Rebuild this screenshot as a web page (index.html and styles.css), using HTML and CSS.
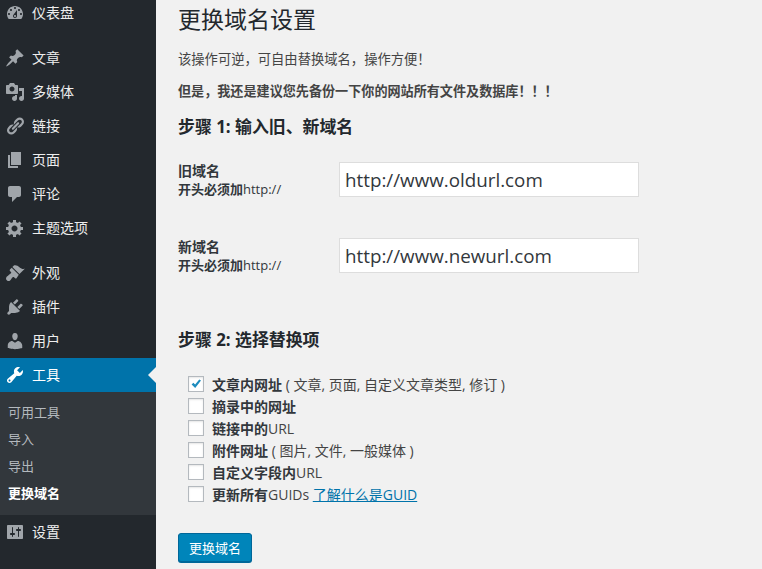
FILE: index.html
```html
<!DOCTYPE html>
<html>

<head>
  <title>更换域名</title>
  <link rel="stylesheet" href="styles.css">
</head>

<body>
  <div class="admin">
    <div class="sidebar">
      <ul class="menu">
        <li class="menu-item">
          <svg class="menu-icon" viewBox="0 0 20 20"><path d="M3.76 16h12.48c1.1-1.37 1.76-3.11 1.76-5 0-4.42-3.58-8-8-8s-8 3.58-8 8c0 1.89.66 3.63 1.76 5zM10 4c.55 0 1 .45 1 1s-.45 1-1 1-1-.45-1-1 .45-1 1-1zM6 6c.55 0 1 .45 1 1s-.45 1-1 1-1-.45-1-1 .45-1 1-1zm8 0c.55 0 1 .45 1 1s-.45 1-1 1-1-.45-1-1 .45-1 1-1zm-5.37 5.55L12 7v6c0 1.1-.9 2-2 2s-2-.9-2-2c0-.57.24-1.08.63-1.45zM4 10c.55 0 1 .45 1 1s-.45 1-1 1-1-.45-1-1 .45-1 1-1zm12 0c.55 0 1 .45 1 1s-.45 1-1 1-1-.45-1-1 .45-1 1-1zm-5 3c0-.55-.45-1-1-1s-1 .45-1 1 .45 1 1 1 1-.45 1-1z"/></svg>
          <span class="menu-label">仪表盘</span>
        </li>
        <li class="menu-sep"></li>
        <li class="menu-item">
          <svg class="menu-icon" viewBox="0 0 20 20"><path d="M10.44 3.02l1.82-1.82 6.36 6.35-1.83 1.82c-1.05-.68-2.48-.57-3.41.36l-.75.75c-.92.93-1.04 2.35-.35 3.41l-1.83 1.82-2.41-2.41-2.8 2.79c-.42.42-3.38 2.71-3.8 2.29s1.86-3.39 2.28-3.81l2.79-2.79L4.1 9.36l1.83-1.82c1.05.69 2.48.57 3.41-.36l.75-.75c.93-.92 1.04-2.35.35-3.41z"/></svg>
          <span class="menu-label">文章</span>
        </li>
        <li class="menu-item">
          <svg class="menu-icon" viewBox="0 0 20 20"><path d="M13 11V4c0-.55-.45-1-1-1h-1.67L9 1H5L3.67 3H2c-.55 0-1 .45-1 1v7c0 .55.45 1 1 1h10c.55 0 1-.45 1-1zM7 4.5c1.38 0 2.5 1.12 2.5 2.5S8.38 9.5 7 9.5 4.5 8.38 4.5 7 5.62 4.5 7 4.5zM14 6h5v10.5c0 1.38-1.12 2.5-2.5 2.5S14 17.88 14 16.5s1.12-2.5 2.5-2.5c.17 0 .34.02.5.05V9h-3V6zm-4 8.05V13h2v3.5c0 1.38-1.12 2.5-2.5 2.5S7 17.88 7 16.5 8.12 14 9.5 14c.17 0 .34.02.5.05z"/></svg>
          <span class="menu-label">多媒体</span>
        </li>
        <li class="menu-item">
          <svg class="menu-icon" viewBox="0 0 20 20"><path d="M17.74 2.76c1.68 1.69 1.68 4.41 0 6.1l-1.53 1.52c-1.12 1.12-2.7 1.47-4.14 1.09l2.62-2.61.76-.77.76-.76c.84-.84.84-2.2 0-3.04-.84-.85-2.2-.85-3.04 0l-.77.76-3.38 3.38c-.37-1.44-.02-3.02 1.1-4.14l1.52-1.53c1.69-1.68 4.42-1.68 6.1 0zM8.59 13.43l5.34-5.34c.42-.42.42-1.1 0-1.52-.44-.43-1.13-.39-1.53 0l-5.33 5.34c-.42.42-.42 1.1 0 1.52.44.43 1.13.39 1.52 0zm-.76 2.29l4.14-4.15c.38 1.44.03 3.02-1.09 4.14l-1.52 1.53c-1.69 1.68-4.41 1.68-6.1 0-1.68-1.68-1.68-4.42 0-6.1l1.53-1.52c1.12-1.12 2.7-1.47 4.14-1.1l-4.14 4.15c-.85.84-.85 2.2 0 3.05.84.84 2.2.84 3.04 0z"/></svg>
          <span class="menu-label">链接</span>
        </li>
        <li class="menu-item">
          <svg class="menu-icon" viewBox="0 0 20 20"><path d="M6 15V2h10v13H6zm-1 1h8v2H3V5h2v11z"/></svg>
          <span class="menu-label">页面</span>
        </li>
        <li class="menu-item">
          <svg class="menu-icon" viewBox="0 0 20 20"><path d="M5 2h9c1.1 0 2 .9 2 2v7c0 1.1-.9 2-2 2h-2l-5 5v-5H5c-1.1 0-2-.9-2-2V4c0-1.1.9-2 2-2z"/></svg>
          <span class="menu-label">评论</span>
        </li>
        <li class="menu-item">
          <svg class="menu-icon" viewBox="0 0 20 20"><path d="M18 12h-2.18c-.17.7-.44 1.35-.81 1.93l1.54 1.54-2.1 2.1-1.54-1.54c-.58.36-1.23.63-1.91.79V19H8v-2.18c-.68-.16-1.33-.43-1.91-.79l-1.54 1.54-2.12-2.12 1.54-1.54c-.36-.58-.63-1.23-.79-1.91H1V9.03h2.17c.16-.7.44-1.35.8-1.94L2.43 5.55l2.1-2.1 1.54 1.54c.58-.37 1.24-.64 1.93-.81V2h3v2.18c.68.16 1.33.43 1.91.79l1.54-1.54 2.12 2.12-1.54 1.54c.36.59.64 1.24.8 1.94H18V12zm-8.5 1.5c1.66 0 3-1.34 3-3s-1.34-3-3-3-3 1.34-3 3 1.34 3 3 3z"/></svg>
          <span class="menu-label">主题选项</span>
        </li>
        <li class="menu-sep"></li>
        <li class="menu-item">
          <svg class="menu-icon" viewBox="0 0 20 20"><path d="M14.48 11.06L7.41 3.99l1.5-1.5c.5-.56 2.3-.47 3.51.32 1.21.8 1.43 1.28 2.91 2.1 1.18.64 2.45 1.26 4.45.85zm-.71.71L6.7 4.7 4.93 6.47c-.39.39-.39 1.02 0 1.41l1.06 1.06c.39.39.39 1.03 0 1.42-.6.6-1.43 1.11-2.21 1.69-.35.26-.7.53-1.01.84C1.43 13.23.64 15.25 1.2 16.6c.55 1.35 2.56 2.13 3.9.82.31-.31.58-.66.84-1.01.58-.78 1.09-1.61 1.69-2.21.39-.39 1.02-.39 1.41 0l1.06 1.06c.39.39 1.02.39 1.41 0z"/></svg>
          <span class="menu-label">外观</span>
        </li>
        <li class="menu-item">
          <svg class="menu-icon" viewBox="0 0 20 20"><path d="M13.11 4.36L9.87 7.6 8 5.73l3.24-3.24c.35-.34 1.05-.2 1.56.32.52.51.66 1.21.31 1.55zm-8 1.77l.91-1.12 9.01 9.01-1.19.84c-.71.71-2.63 1.16-3.82 1.16H6.14L4.9 17.26c-.59.59-1.54.59-2.12 0-.59-.58-.59-1.53 0-2.12l1.24-1.24v-3.88c0-1.13.4-3.19 1.09-3.89zm7.26 3.97l3.24-3.24c.34-.35 1.04-.21 1.55.31.52.51.66 1.21.31 1.55l-3.24 3.25z"/></svg>
          <span class="menu-label">插件</span>
        </li>
        <li class="menu-item">
          <svg class="menu-icon" viewBox="0 0 20 20"><path d="M10 9.25c-2.27 0-2.73-3.44-2.73-3.44C7 4.02 7.82 2 9.97 2c2.16 0 2.98 2.02 2.71 3.81 0 0-.41 3.44-2.68 3.44zm0 2.57L12.72 10c2.39 0 4.52 2.33 4.52 4.53v2.49s-3.65 1.13-7.24 1.13c-3.65 0-7.24-1.13-7.24-1.13v-2.49c0-2.25 1.94-4.48 4.47-4.48z"/></svg>
          <span class="menu-label">用户</span>
        </li>
        <li class="menu-item current">
          <svg class="menu-icon" viewBox="0 0 20 20"><path d="M16.68 9.77c-1.34 1.34-3.3 1.67-4.95.99l-5.41 6.52c-.99.99-2.59.99-3.58 0s-.99-2.59 0-3.57l6.52-5.42c-.68-1.65-.35-3.61.99-4.95 1.28-1.28 3.12-1.62 4.72-1.06l-2.89 2.89 2.82 2.82 2.86-2.87c.53 1.58.18 3.39-1.08 4.65zM3.81 16.21c.4.39 1.04.39 1.43 0 .4-.4.4-1.04 0-1.43-.39-.4-1.03-.4-1.43 0-.39.39-.39 1.03 0 1.43z"/></svg>
          <span class="menu-label">工具</span>
        </li>
        <li class="submenu">
          <div class="submenu-item">可用工具</div>
          <div class="submenu-item">导入</div>
          <div class="submenu-item">导出</div>
          <div class="submenu-item active">更换域名</div>
        </li>
        <li class="menu-item">
          <svg class="menu-icon" viewBox="0 0 20 20"><path d="M18 16V4c0-.55-.45-1-1-1H3c-.55 0-1 .45-1 1v12c0 .55.45 1 1 1h14c.55 0 1-.45 1-1zM8 11h1c.55 0 1 .45 1 1s-.45 1-1 1H8v1.5c0 .28-.22.5-.5.5s-.5-.22-.5-.5V13H6c-.55 0-1-.45-1-1s.45-1 1-1h1V5.5c0-.28.22-.5.5-.5s.5.22.5.5V11zm5-2h-1c-.55 0-1-.45-1-1s.45-1 1-1h1V5.5c0-.28.22-.5.5-.5s.5.22.5.5V7h1c.55 0 1 .45 1 1s-.45 1-1 1h-1v5.5c0 .28-.22.5-.5.5s-.5-.22-.5-.5V9z"/></svg>
          <span class="menu-label">设置</span>
        </li>
      </ul>
    </div>

    <div class="content">
      <h1>更换域名设置</h1>
      <p class="intro">该操作可逆，可自由替换域名，操作方便！</p>
      <p class="warning">但是，我还是建议您先备份一下你的网站所有文件及数据库！！！</p>

      <h2>步骤 1: 输入旧、新域名</h2>
      <div class="field">
        <label class="field-label"><b class="field-name">旧域名</b><b>开头必须加</b>http://</label>
        <input class="url-input" type="text" value="http://www.oldurl.com">
      </div>
      <div class="field">
        <label class="field-label"><b class="field-name">新域名</b><b>开头必须加</b>http://</label>
        <input class="url-input" type="text" value="http://www.newurl.com">
      </div>

      <h2 class="step-two">步骤 2: 选择替换项</h2>
      <ul class="options">
        <li><span class="check checked"><svg viewBox="0 0 16 16"><path d="M3 8.5l2-2 2 2.2 4.7-5.9 2 1.3-6.6 8.6z"/></svg></span><span><b>文章内网址</b> ( 文章, 页面, 自定义文章类型, 修订 )</span></li>
        <li><span class="check"></span><span><b>摘录中的网址</b></span></li>
        <li><span class="check"></span><span><b>链接中的</b>URL</span></li>
        <li><span class="check"></span><span><b>附件网址</b> ( 图片, 文件, 一般媒体 )</span></li>
        <li><span class="check"></span><span><b>自定义字段内</b>URL</span></li>
        <li><span class="check"></span><span><b>更新所有</b>GUIDs <a href="#">了解什么是GUID</a></span></li>
      </ul>

      <button class="submit-btn">更换域名</button>
    </div>
  </div>
</body>

</html>
```

FILE: styles.css
```css
html,
body {
  margin: 0;
  height: 100%;
  overflow: hidden;
}

body {
  background-color: #f1f1f1;
  color: #444;
  font-family: "Open Sans", "Noto Sans CJK SC", sans-serif;
  font-size: 13px;
}

.admin {
  display: flex;
  height: 569px;
}

/* --- Sidebar --- */
.sidebar {
  width: 156px;
  flex-shrink: 0;
  background-color: #23282d;
  overflow: hidden;
}

.menu {
  list-style: none;
  margin: -4px 0 0;
  padding: 0;
}

.menu-item {
  position: relative;
  display: flex;
  align-items: center;
  height: 34px;
  padding-left: 5px;
  color: #eee;
  font-size: 14px;
}

.menu-icon {
  width: 20px;
  height: 20px;
  margin-right: 7px;
  fill: #a0a5aa;
}

.menu-label {
  margin-bottom: 2px;
}

.menu-sep {
  height: 11px;
}

.menu-item.current {
  background-color: #0073aa;
  color: #fff;
}

.menu-item.current .menu-icon {
  fill: #fff;
}

.menu-item.current::after {
  content: "";
  position: absolute;
  right: 0;
  top: 9px;
  border: 8px solid transparent;
  border-right-color: #f1f1f1;
  border-left-width: 0;
}

.submenu {
  background-color: #32373c;
  padding: 7px 0 8px;
}

.submenu-item {
  height: 27px;
  line-height: 27px;
  padding-left: 8px;
  color: #b4b9be;
}

.submenu-item.active {
  color: #fff;
  font-weight: 700;
}

/* --- Content --- */
.content {
  flex: 1;
  padding: 0 0 0 22px;
}

h1 {
  margin: 0;
  padding-top: 2px;
  color: #23282d;
  font-size: 23px;
  font-weight: 400;
  line-height: 34px;
}

.intro {
  margin: 14px 0 0;
  font-size: 13.3px;
  line-height: 18px;
}

.warning {
  margin: 14px 0 0;
  font-size: 13.1px;
  line-height: 18px;
  font-weight: 700;
}

h2 {
  margin: 16px 0 0;
  color: #23282d;
  font-size: 16.9px;
  font-weight: 700;
  line-height: 22px;
}

.field {
  display: flex;
  align-items: center;
  height: 35px;
  margin-top: 24px;
  margin-bottom: 41px;
}

.field + .field {
  margin-top: 0;
  margin-bottom: 56px;
}

.field-label {
  width: 161px;
  flex-shrink: 0;
  font-size: 13px;
  line-height: 18px;
  color: #32373c;
}

.field-name {
  display: block;
  font-size: 14px;
}

.url-input {
  box-sizing: border-box;
  width: 300px;
  height: 35px;
  padding: 0 5px;
  border: 1px solid #ddd;
  background-color: #fff;
  color: #32373c;
  font-family: "Open Sans", "Noto Sans CJK SC", sans-serif;
  font-size: 18.8px;
}

.step-two {
  margin-top: 0;
}

.options {
  list-style: none;
  margin: 22px 0 0;
  padding: 0 0 0 10px;
  font-size: 14px;
}

.options li {
  display: flex;
  align-items: center;
  height: 22px;
  white-space: pre;
}

.check {
  box-sizing: border-box;
  width: 16px;
  height: 16px;
  margin-right: 8px;
  border: 1px solid #b4b9be;
  background-color: #fff;
  box-shadow: inset 0 1px 2px rgba(0, 0, 0, 0.1);
}

.check svg {
  display: block;
  width: 14px;
  height: 14px;
  fill: #1e8cbe;
}

.options b {
  color: #32373c;
}

.options a {
  color: #0073aa;
}

.submit-btn {
  display: block;
  box-sizing: border-box;
  width: 74px;
  height: 29px;
  margin-top: 28px;
  padding: 0;
  border: 1px solid #006799;
  border-radius: 3px;
  background-color: #0085ba;
  box-shadow: 0 1px 0 #006799;
  color: #fff;
  font-family: "Open Sans", "Noto Sans CJK SC", sans-serif;
  font-size: 13px;
}
```
